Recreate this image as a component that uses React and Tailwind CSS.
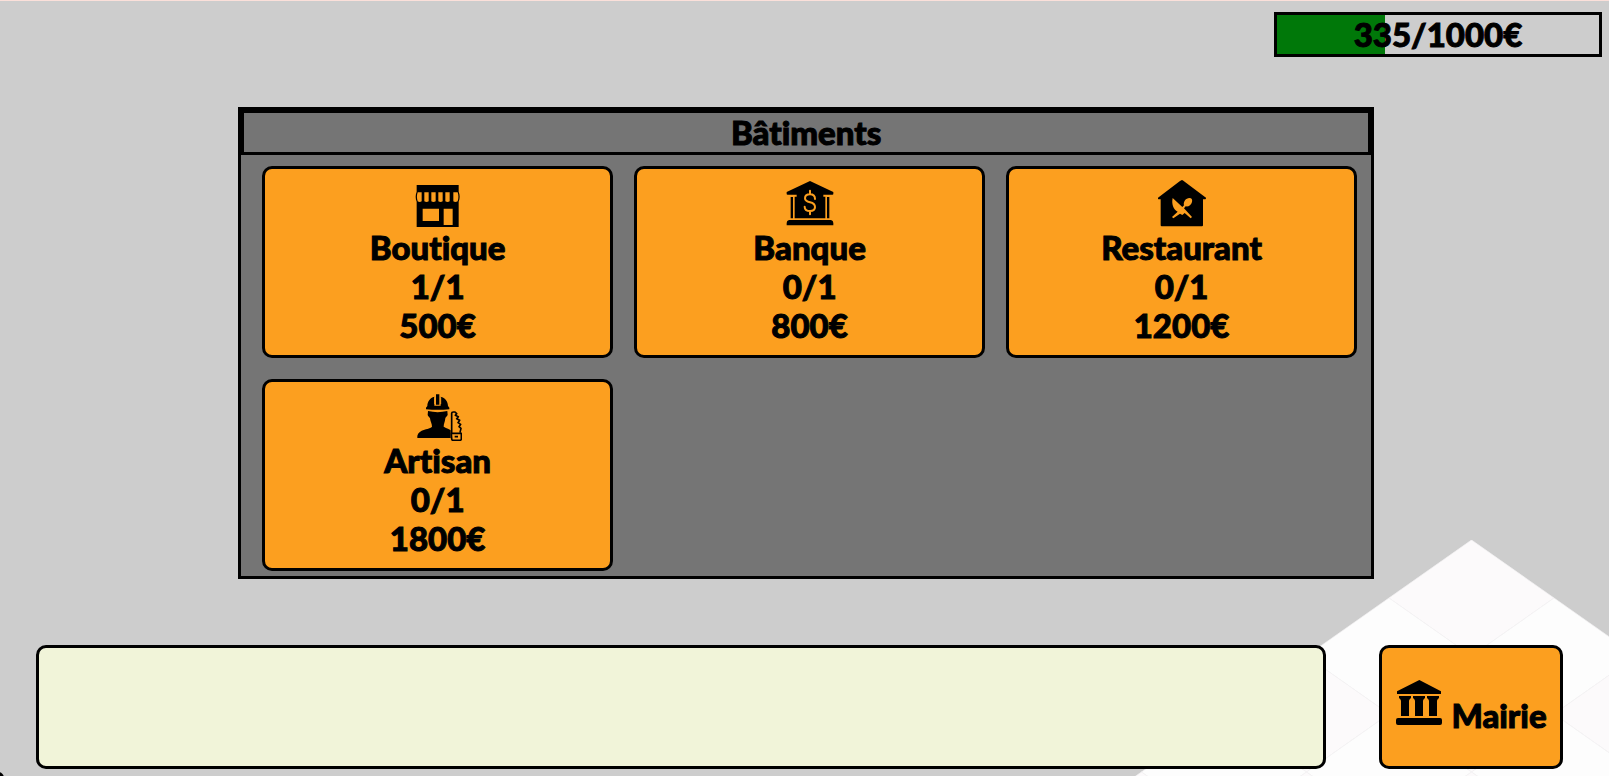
import React from "react";

function ShopIcon() {
  return (
    <svg viewBox="39 14 144 144" className="size-12" aria-hidden="true">
      <path
        fill="currentColor"
        fillRule="evenodd"
        d="M47 29H173V49C177 58 177 70 173 79V155H47V79C43 70 43 58 47 49ZM50 51C47 60 47 69 50 78Q56 82 62 78V51ZM70 51V78Q77 82 83 78V51ZM91 51V78Q97 82 104 78V51ZM112 51V78Q119 82 125 78V51ZM133 51V78Q140 82 146 78V51ZM157 51V78Q163 82 170 78C173 69 173 60 170 51ZM65 100V137H114V100ZM128 100V149H155V100Z"
      />
    </svg>
  );
}

function BankIcon() {
  return (
    <svg viewBox="44 14 144 144" className="size-12" aria-hidden="true">
      <path fill="currentColor" d="M116 17L46 50V56Q46 58 49 58H76V64H70V129H162V64H156V58H183Q186 58 186 56V50ZM58 65H65V129H58ZM167 65H174V129H167ZM53 134H179Q186 136 186 143V150H46V143Q46 136 53 134Z" />
      <path
        fill="none"
        stroke="#fc9f1f"
        strokeWidth="6"
        strokeLinecap="round"
        d="M116 46V57M116 107V117M131 71C131 61 124 57 116 57C107 57 101 62 101 69C101 77 107 79 116 81C125 83 131 86 131 95C131 103 125 107 116 107C107 107 100 103 100 94"
      />
    </svg>
  );
}

function RestaurantIcon() {
  return (
    <svg viewBox="50 14 144 144" className="size-12" aria-hidden="true">
      <path fill="currentColor" d="M122 14Q125 15 128 18L194 67Q195 72 188 72H185V150Q185 153 182 153H61Q58 153 58 150V72H54Q48 72 50 67L115 18Q119 15 122 14Z" />
      <path fill="#fc9f1f" d="M94 68L123 95L128 90C125 79 134 68 144 68C151 68 154 73 152 80C150 89 141 95 133 93L128 99L152 125L148 129L130 113L123 119L116 115L96 129L92 125L109 109C96 103 90 85 94 68Z" />
    </svg>
  );
}

function CraftsmanIcon() {
  return (
    <svg viewBox="39 25 144 144" className="size-12" aria-hidden="true">
      <path fill="currentColor" d="M105 29H115V60H105ZM100 36V63H119V36C133 39 141 51 141 64L145 69V74Q110 77 75 74V69L79 64C79 51 87 39 100 36ZM81 79Q110 86 139 79L140 91C137 97 135 95 133 101C132 112 128 117 128 126C138 133 145 132 149 137V160H49C48 150 52 143 62 138C73 133 87 132 93 126C93 117 88 111 87 101C84 96 81 94 80 91Z" />
      <path
        fill="none"
        stroke="#fc9f1f"
        strokeWidth="3"
        d="M101 38V58M119 38V58"
      />
      <path
        fill="none"
        stroke="currentColor"
        strokeWidth="5"
        strokeLinejoin="round"
        d="M152 145V86Q152 82 157 82H162L167 87L163 92L172 96L167 102L176 107L171 114L179 119L174 126L180 131L177 143M151 146H181V162Q181 167 176 167H157Q152 167 152 162ZM161 156H171"
      />
    </svg>
  );
}

function TownHallIcon() {
  return (
    <svg viewBox="75 120 144 144" className="size-12 shrink-0" aria-hidden="true">
      <path fill="currentColor" d="M148 120L213 154V162H81V154ZM87 168H123V174L119 178L117 182V228H93V182L91 178L87 174ZM129 168H165V174L161 178L159 182V228H135V182L133 178L129 174ZM171 168H207V174L203 178L201 182V228H177V182L175 178L171 174ZM84 234H210Q216 234 216 240V249Q216 255 210 255H84Q78 255 78 249V240Q78 234 84 234Z" />
    </svg>
  );
}

const buildings = [
  { name: "Boutique", count: "1/1", price: "500€", Icon: ShopIcon },
  { name: "Banque", count: "0/1", price: "800€", Icon: BankIcon },
  { name: "Restaurant", count: "0/1", price: "1200€", Icon: RestaurantIcon },
  { name: "Artisan", count: "0/1", price: "1800€", Icon: CraftsmanIcon },
];

// Isometric floor: half a tile is 82.5 wide and 58 high.
const tiles = [];
for (let row = 0; row < 6; row++) {
  for (let col = 0; col < 6; col++) {
    const x = 412.5 + (col - row) * 82.5;
    const y = (col + row) * 58;
    tiles.push({
      key: `${row}-${col}`,
      points: `${x},${y} ${x + 82.5},${y + 58} ${x},${y + 116} ${x - 82.5},${y + 58}`,
      fill: (row + col) % 2 === 0 ? "#fcfafb" : "#fdfdfd",
    });
  }
}

function Floor() {
  return (
    <svg viewBox="0 0 550 236" className="absolute right-0 bottom-0 h-[236px] w-[550px]" aria-hidden="true">
      {tiles.map((t) => (
        <polygon key={t.key} points={t.points} fill={t.fill} stroke="#f4f2f3" strokeWidth="0.7" />
      ))}
    </svg>
  );
}

function BuildingCard({ name, count, price, Icon }) {
  return (
    <button
      type="button"
      className="flex flex-col items-center rounded-[10px] border-3 border-black bg-[#fc9f1f] pt-[11px] pb-[10px] leading-[39px]"
    >
      <Icon />
      <span>{name}</span>
      <span>{count}</span>
      <span>{price}</span>
    </button>
  );
}

export default function App() {
  const money = 335;
  const goal = 1000;
  return (
    <div className="relative flex min-h-screen flex-col overflow-hidden border-t border-[#fbe0da] bg-[#cdcdcd] pt-[11px] pb-[7px] font-['Fredoka_One','Lato',sans-serif] text-[33px] font-black text-black [-webkit-text-stroke:1px_black] [font-variant-ligatures:none] [stroke-linejoin:round]">
      <Floor />
      <div className="absolute -bottom-2 -left-2 size-3 rounded-full bg-black" />

      <header className="relative flex justify-end pr-[7px]">
        <div className="relative box-content h-[39px] w-[20.1%] border-3 border-black">
          <div className="h-full bg-[#007809]" style={{ width: `${(money / goal) * 100}%` }} />
          <span className="absolute inset-0 text-center leading-[38px]">
            {money}/{goal}€
          </span>
        </div>
      </header>

      <main className="relative mt-[50px] mb-16 ml-[14.8%] w-[70.6%] border-3 border-black bg-[#757575]">
        <h1 className="border-3 border-black text-center leading-[39px]">Bâtiments</h1>
        <div className="grid grid-cols-3 gap-x-[21px] gap-y-[21px] pt-[11px] pr-[14px] pb-[5px] pl-[21px]">
          {buildings.map((b) => (
            <BuildingCard key={b.name} {...b} />
          ))}
        </div>
      </main>

      <footer className="relative mt-auto flex h-[124px] justify-between pr-[46px] pl-9">
        <section aria-label="Informations" className="w-[84.5%] rounded-[10px] border-3 border-black bg-[#f1f4d9]" />
        <button
          type="button"
          className="flex w-[184px] items-center justify-center rounded-[10px] border-3 border-black bg-[#fc9f1f]"
        >
          <span className="flex items-baseline gap-2">
            <TownHallIcon />
            <span className="leading-[39px]">Mairie</span>
          </span>
        </button>
      </footer>
    </div>
  );
}
